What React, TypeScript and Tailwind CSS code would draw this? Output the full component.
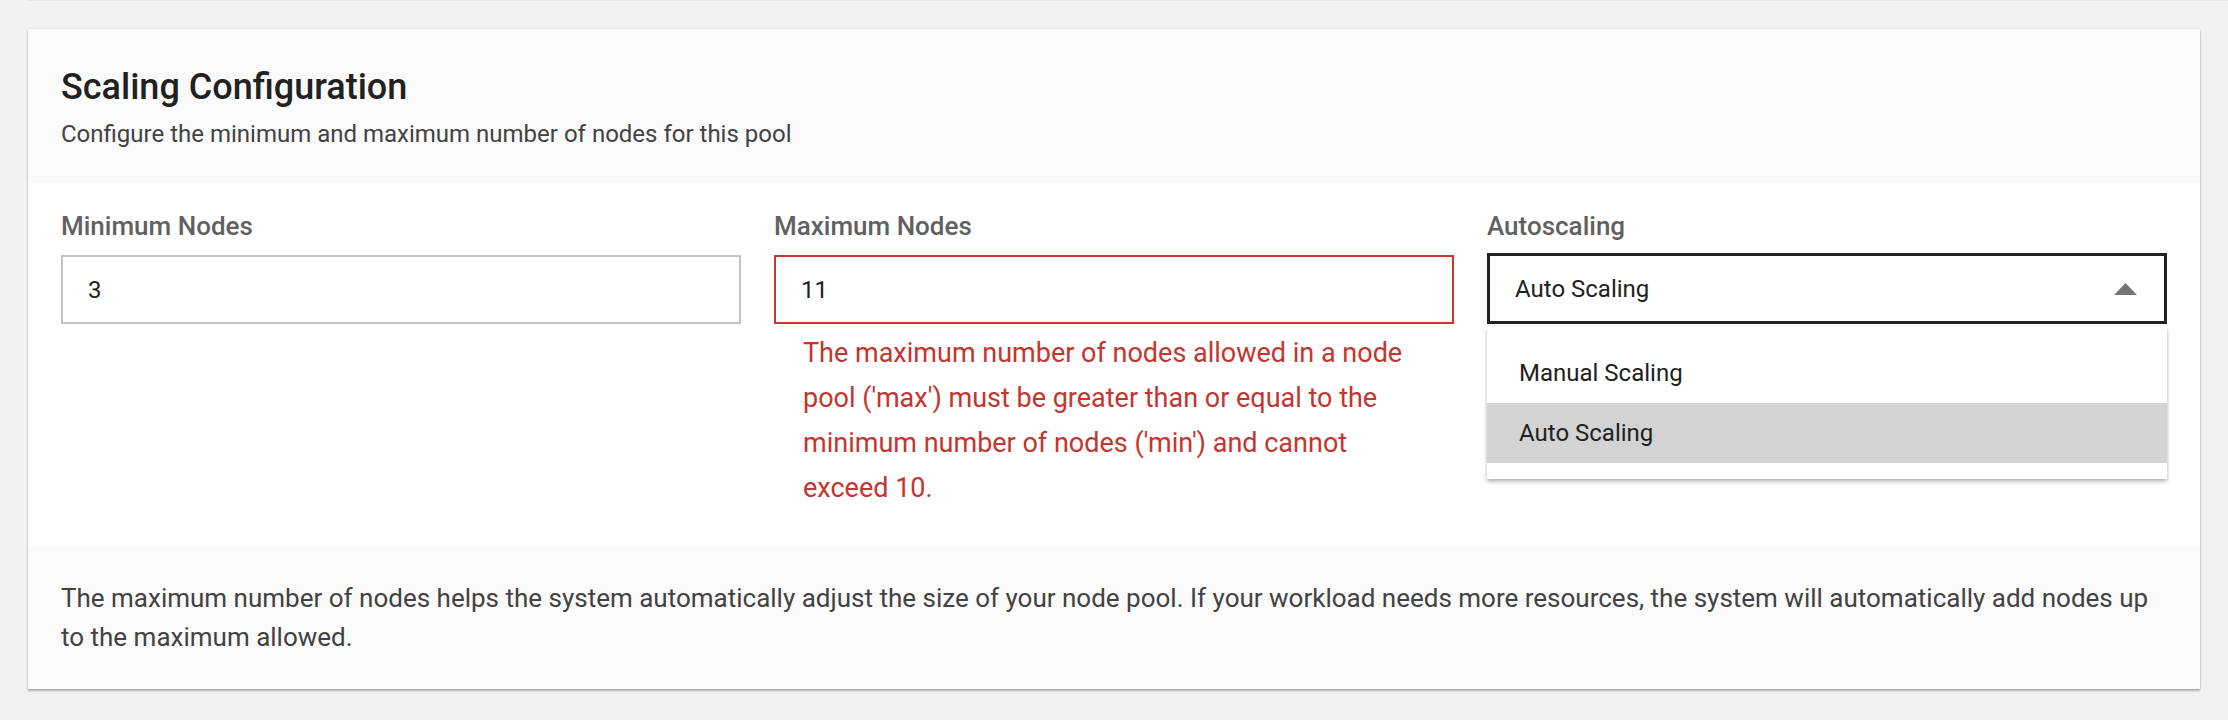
import { useState } from "react";

const options = ["Manual Scaling", "Auto Scaling"];

function TextField({
  label,
  value,
  error,
}: {
  label: string;
  value: string;
  error?: string;
}) {
  return (
    <div className="flex flex-col">
      <label className="text-[26px] leading-[32px] font-medium text-[#616161]">{label}</label>
      <div
        className={`mt-[13px] h-[69px] border-2 bg-white flex items-center px-[25px] text-[24px] text-[#212121] ${
          error ? "border-[#c8372f]" : "border-[#c4c4c4]"
        }`}
      >
        {value}
      </div>
      {error && (
        <p className="mt-[7px] px-[29px] text-[27px] leading-[45px] text-[#c5352f]">{error}</p>
      )}
    </div>
  );
}

function SelectField({ label }: { label: string }) {
  const [value, setValue] = useState("Auto Scaling");

  return (
    <div className="flex flex-col">
      <label className="text-[26px] leading-[32px] font-medium text-[#616161]">{label}</label>
      <div className="relative mt-[11px]">
        <div className="h-[71px] border-[3px] border-[#222222] bg-white flex items-center justify-between pl-[25px] pr-[27px] text-[24px] text-[#212121]">
          <span>{value}</span>
          <svg width="23" height="12" viewBox="0 0 23 12">
            <path d="M11.5 0 L23 12 L0 12 Z" fill="#757575" />
          </svg>
        </div>
        {/* Open menu */}
        <ul className="absolute left-0 right-0 top-[74px] z-10 bg-white py-[16px] shadow-[0_3px_4px_rgba(0,0,0,0.22),0_1px_3px_rgba(0,0,0,0.12)]">
          {options.map((opt) => (
            <li
              key={opt}
              onClick={() => setValue(opt)}
              className={`h-[60px] flex items-center px-[32px] text-[24px] text-[#212121] cursor-pointer ${
                opt === value ? "bg-[#d3d3d3]" : ""
              }`}
            >
              {opt}
            </li>
          ))}
        </ul>
      </div>
    </div>
  );
}

export default function App() {
  return (
    <div
      className="min-h-[720px] bg-[#f1f3f2] flex flex-col"
      style={{ fontFamily: "Roboto, 'Noto Sans', sans-serif" }}
    >
      <div className="ml-[28px] h-px bg-[#e5e7e5]" />

      <div className="mx-[28px] mt-[28px] bg-white shadow-[0_2px_2px_rgba(0,0,0,0.28),0_0_2px_rgba(0,0,0,0.14)]">
        {/* Header */}
        <div className="bg-[#fafafa] px-[33px] pt-[37px] pb-[33px]">
          <h2 className="text-[36px] leading-[42px] font-medium text-[#212121]">
            Scaling Configuration
          </h2>
          <p className="mt-[10px] text-[24px] leading-[32px] text-[#424242]">
            Configure the minimum and maximum number of nodes for this pool
          </p>
        </div>

        {/* Fields */}
        <div className="grid grid-cols-3 gap-[33px] px-[33px] pt-[27px] pb-[36px]">
          <TextField label="Minimum Nodes" value="3" />
          <TextField
            label="Maximum Nodes"
            value="11"
            error="The maximum number of nodes allowed in a node pool ('max') must be greater than or equal to the minimum number of nodes ('min') and cannot exceed 10."
          />
          <SelectField label="Autoscaling" />
        </div>

        {/* Footer */}
        <div className="bg-[#fafafa] px-[33px] pt-[32px] pb-[32px]">
          <p className="text-[26px] leading-[39px] text-[#424242]">
            The maximum number of nodes helps the system automatically adjust the size of your node
            pool. If your workload needs more resources, the system will automatically add nodes up
            to the maximum allowed.
          </p>
        </div>
      </div>
    </div>
  );
}
